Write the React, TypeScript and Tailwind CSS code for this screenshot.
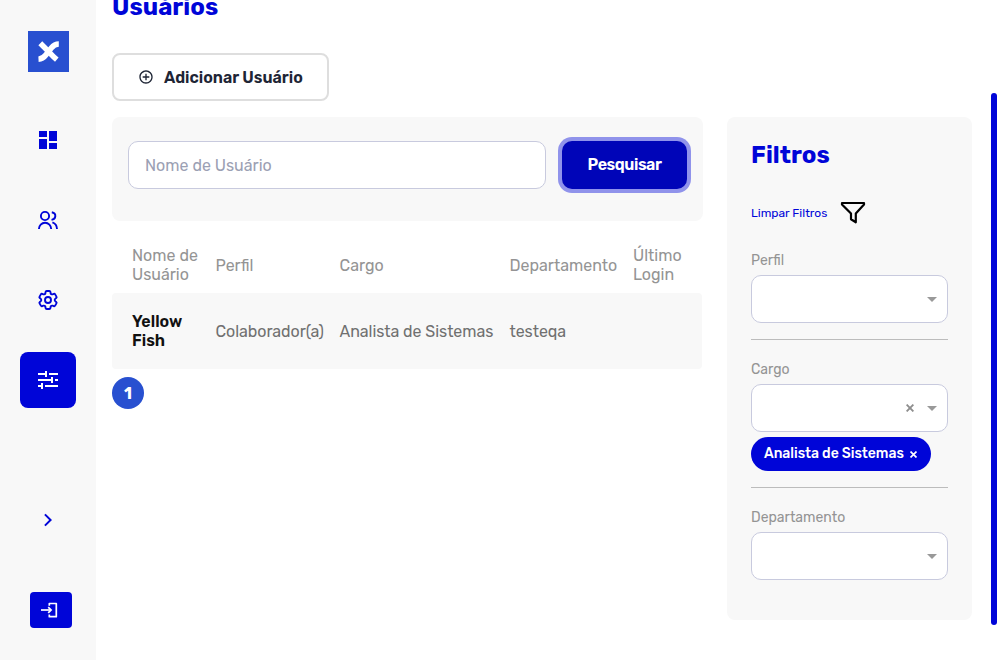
import { RiAddCircleLine, RiArrowRightSLine } from "react-icons/ri";
import { HiOutlineCog6Tooth } from "react-icons/hi2";

function DashboardIcon() {
  return (
    <svg viewBox="0 0 24 24" className="size-6" fill="currentColor" shapeRendering="crispEdges">
      <path d="M3 3h8v6H3zM3 11h8v10H3zM13 3h8v10h-8zM13 15h8v6h-8z" />
    </svg>
  );
}

function UsersIcon() {
  return (
    <svg viewBox="0 0 24 24" className="size-6" fill="none" stroke="currentColor" strokeWidth="1.9">
      <circle cx="9" cy="8" r="4.1" />
      <path d="M2.9 21a6.15 6.3 0 0 1 12.3 0" />
      <path d="M15.800 4.300c2.600.500 3.700 2.200 3.500 4.100-.2 1.900-1.600 3.200-3.800 3.500" />
      <path d="M16.400 14.300c2.600.9 4.500 3.300 4.600 6.700" />
    </svg>
  );
}

function TuneIcon() {
  return (
    <svg viewBox="0 0 24 24" className="size-6" fill="currentColor" shapeRendering="crispEdges">
      <path d="M2 5h7V3h2v6H9V7H2zM13 5h9v2h-9zM2 11h13V9h2v6h-2v-2H2zM19 11h3v2h-3zM2 17h3v-2h2v6H5v-2H2zM9 17h13v2H9z" />
    </svg>
  );
}

function LoginIcon() {
  return (
    <svg viewBox="0 0 20 18" className="h-[18px] w-5" fill="none" stroke="currentColor" strokeWidth="1.7">
      <path d="M8.300 4.800V2.500h7v13.200h-7v-2.300" strokeLinejoin="round" />
      <path d="M0 9h10" />
      <path d="M7.200 6.100 10.100 9l-2.900 2.900" />
    </svg>
  );
}

function FunnelIcon() {
  return (
    <svg viewBox="0 0 26 24" className="mt-px h-6 w-[26px]" fill="none" stroke="#000" strokeWidth="2.200" strokeLinejoin="round">
      <path d="M2 2h22v1.500l-8.200 9v8.800l-4.800-3v-5.800L2 3.500z" />
    </svg>
  );
}

function Logo() {
  return (
    <svg viewBox="0 0 41 41" className="size-[41px] bg-[#2850d0]" fill="none" stroke="#fff" strokeWidth="5.500">
      <path d="M12.300 12.300l6 6c3.500 3.500 6.500 7 10.500 10.400" />
      <path d="M30.800 13c-3.800 0-5.500 1.500-7.500 4l-5.500 7c-1.800 2.400-3.500 4-7.300 4.200" />
    </svg>
  );
}

function Caret() {
  return (
    <svg viewBox="0 0 10 5" className="h-[5px] w-[10px]" fill="#999">
      <path d="M0 0h10L5 5z" />
    </svg>
  );
}

function Cross({ className }: { className: string }) {
  return (
    <svg viewBox="0 0 8 8" className={className} fill="none" stroke="currentColor" strokeWidth="1.900">
      <path d="m.6.6 6.800 6.800M7.400.6.6 7.400" />
    </svg>
  );
}

function SelectBox({ clearable = false }: { clearable?: boolean }) {
  return (
    <div className="flex h-12 items-center justify-end gap-[13px] rounded-[10px] border border-[#c8cade] bg-white pr-[10px] text-[#8e8e8e]">
      {clearable && <Cross className="size-2" />}
      <Caret />
    </div>
  );
}

const label = "block h-[19px] text-sm leading-[19px] text-[#949494]";

export default function App() {
  return (
    <div className="flex h-[660px] w-[1000px] overflow-hidden bg-white font-['Rubik','Roboto',sans-serif]">
      <nav className="flex w-24 shrink-0 flex-col items-center bg-[#f8f8f8] text-[#0005d8]">
        <div className="mt-[31px]"><Logo /></div>
        <div className="mt-10 flex flex-col gap-6">
          <a className="grid size-14 place-items-center"><DashboardIcon /></a>
          <a className="grid size-14 place-items-center"><UsersIcon /></a>
          <a className="grid size-14 place-items-center"><HiOutlineCog6Tooth className="size-6" strokeWidth="1.9" /></a>
          <a className="grid size-14 place-items-center rounded-lg bg-[#0005d8] text-white"><TuneIcon /></a>
        </div>
        <RiArrowRightSLine className="mt-[100px] size-6" />
        <button className="mt-[60px] ml-[6px] grid h-9 w-[42px] place-items-center rounded bg-[#0005d8] text-white"><LoginIcon /></button>
      </nav>

      <main className="ml-4 w-[591px] shrink-0">
        <h1 className="-mt-[9px] h-8 text-2xl leading-8 font-bold tracking-[0.05px] text-[#0005d8]">Usuários</h1>
        <button className="mt-[30px] flex h-12 w-[217px] items-center rounded-lg border-2 border-[#dedede] pl-6 text-[#1e2535]">
          <RiAddCircleLine className="size-4" />
          <span className="ml-[10px] pt-0.5 font-semibold whitespace-nowrap">Adicionar Usuário</span>
        </button>
        <section className="mt-4 flex h-[104px] gap-4 rounded-lg bg-[#f8f8f8] px-4 pt-6">
          <input className="h-12 w-[418px] rounded-[10px] border border-[#c8cade] bg-white px-4 placeholder:text-[#9ba0b3]" placeholder="Nome de Usuário" />
          <button className="h-12 w-[125px] rounded-[10px] bg-[#0005b8] font-semibold tracking-[-0.45px] text-white ring-4 ring-[#9093eb]">Pesquisar</button>
        </section>
        <div className="mt-6 grid h-12 w-[590px] grid-cols-[83.5px_124px_170px_123.5px_1fr] items-start pl-5 leading-[19px] text-[#949494]">
          <div className="pt-px">Nome de<br />Usuário</div>
          <div className="pt-[11px]">Perfil</div>
          <div className="pt-[11px]">Cargo</div>
          <div className="pt-[11px]">Departamento</div>
          <div className="pt-px">Último<br />Login</div>
        </div>
        <div className="grid h-[76px] w-[590px] grid-cols-[83.5px_124px_170px_1fr] items-center rounded bg-[#f8f8f8] pl-5 leading-[19px] tracking-[-0.06px] text-[#707070]">
          <div className="font-semibold tracking-normal text-[#111]">Yellow<br />Fish</div>
          <div>Colaborador(a)</div>
          <div>Analista de Sistemas</div>
          <div>testeqa</div>
        </div>
        <button className="mt-2 grid size-8 place-items-center rounded-full bg-[#2850d0] pt-0.5 font-bold text-white">1</button>
      </main>

      <aside className="mt-[117px] ml-6 h-[503px] w-[245px] shrink-0 rounded-lg bg-[#f8f8f8] px-6 pt-[22px]">
        <h2 className="h-8 text-2xl leading-8 font-bold tracking-[0.05px] text-[#0005d8]">Filtros</h2>
        <div className="mt-[29px] flex h-6 items-center gap-3 text-xs text-[#0005d8]">
          <span className="w-[77px] pt-0.5 whitespace-nowrap">Limpar Filtros</span>
          <FunnelIcon />
        </div>
        <label className={`${label} mt-[27px] mb-[5px]`}>Perfil</label>
        <SelectBox />
        <div className="mt-4 h-px bg-[#bcbcbc]" />
        <label className={`${label} mt-5 mb-[5px]`}>Cargo</label>
        <SelectBox clearable />
        <div className="mt-[5px] flex h-[34px] w-[180px] items-center rounded-full bg-[#0005d8] pl-[13px] text-sm text-white">
          <span className="w-[139px] whitespace-nowrap font-medium tracking-[-0.04px]">Analista de Sistemas</span>
          <Cross className="ml-[7px] size-[7px]" />
        </div>
        <div className="mt-4 h-px bg-[#bcbcbc]" />
        <label className={`${label} mt-5 mb-[5px]`}>Departamento</label>
        <SelectBox />
      </aside>
      <div className="mt-[93px] ml-[19px] h-[532px] w-[6px] shrink-0 rounded-full bg-[#0005d8]" />
    </div>
  );
}
